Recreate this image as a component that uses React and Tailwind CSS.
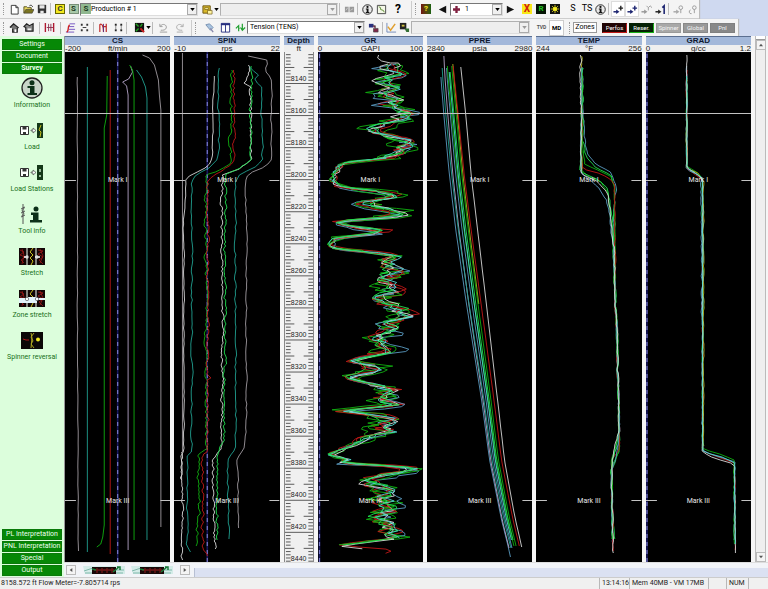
import React from "react";
import clsx from "clsx";

const GREEN = "#10b010";
const LIME = "#20e050";
const TEAL = "#20a090";
const AQUA = "#50d8d0";
const WHITE = "#d8d8d8";
const GREY = "#a09aa0";
const LILAC = "#b4a4c8";
const RED = "#c01818";
const BLUE = "#5a9ac0";
const YELLOW = "#b0b020";

/* ---------- curve helpers ---------- */

function random(seed) {
  let s = (seed * 7919 + 17) % 233280;
  return () => {
    s = (s * 9301 + 49297) % 233280;
    return s / 233280 - 0.5;
  };
}

function valueAt(points, y) {
  if (y <= points[0][1]) return points[0][0];
  for (let i = 1; i < points.length; i++) {
    const [x1, y1] = points[i];
    const [x0, y0] = points[i - 1];
    if (y <= y1) return x0 + ((x1 - x0) * (y - y0)) / (y1 - y0 || 1);
  }
  return points[points.length - 1][0];
}

function trace(points, { noise = 0, seed = 1, step = 2, shift = 0, calmBelow = 0 } = {}) {
  if (!noise) return "M" + points.map((p) => p.join(" ")).join("L");
  const next = random(seed);
  const out = [];
  let drift = 0;
  const end = points[points.length - 1][1];
  for (let y = points[0][1]; y <= end; y += step) {
    const x = valueAt(points, y + shift);
    drift = drift * 0.45 + next() * noise * (x < calmBelow ? 0.35 : 1);
    out.push(`${(x + drift).toFixed(1)} ${y.toFixed(1)}`);
  }
  return "M" + out.join("L");
}

const line = (color, pts, noise = 0, seed = 1, step = 2) => ({ color, d: trace(pts, { noise, seed, step }) });

/* ---------- track data, in chart units ---------- */

const cs = [
  line(GREY, [[77.5, 77], [77.5, 300], [78.5, 554]], 0.5, 2, 6),
  line(TEAL, [[87.5, 67], [87.5, 552]]),
  line(GREEN, [[107.5, 76], [107, 115], [104.5, 128], [104.5, 525], [103, 537], [101, 544], [97, 547]]),
  line(RED, [[110.5, 70], [110.5, 554]]),
  line(LILAC, [[131, 66], [133, 72], [129, 79], [123, 82], [127, 86], [128.5, 95], [128.5, 550]]),
  line(GREEN, [[130, 65], [133, 70], [134.5, 80], [134.5, 540]]),
  line(TEAL, [[137, 70], [142, 77], [146, 87], [147.5, 98], [147.5, 540]]),
  line(GREY, [[143, 55], [150, 58], [155, 65], [159, 80], [160, 95], [161.5, 110], [161.5, 527]]),
];

const spin = [
  line(GREY, [[182.5, 53], [182.5, 452]]),
  line(WHITE, [[182, 452], [181, 470], [183, 510], [182, 560]], 2, 21, 2),
  line(WHITE, [[215, 76], [213, 100], [213, 155], [211, 163], [203, 170], [190, 175], [186, 180], [185, 200], [183, 235], [184, 250], [184, 450], [181, 455], [182, 480]], 1, 3, 4),
  line(TEAL, [[219, 68], [219, 150], [217, 160], [210, 168], [195, 176], [192, 185], [192, 452], [187, 456], [187, 545], [191, 552]], 1.8, 4, 4),
  line(GREEN, [[232, 70], [232, 120], [230, 140], [231, 163], [220, 169], [207, 175], [206, 195], [207, 449], [199, 455], [198, 540], [194, 547]], 3, 5),
  line(RED, [[234.5, 70], [234, 163], [222, 171], [208, 179], [208, 375], [213, 377], [208, 380], [208, 450], [203, 456], [203, 545], [207, 556]], 2.6, 6),
  line(WHITE, [[250, 65], [248, 77], [244, 83], [251, 87], [251, 160], [240, 169], [224, 175], [222, 185], [222, 250], [223, 310], [222, 440], [220, 451], [213, 460], [215, 550]], 2.4, 7),
  line(LIME, [[251, 66], [252, 80], [251, 120], [252, 160], [240, 168], [226, 174], [225, 250], [226, 320], [224, 440], [218, 455], [218, 540]], 2.6, 8),
  line(TEAL, [[250, 67], [260, 75], [256, 79], [262, 87], [263, 160], [255, 168], [240, 174], [236, 180], [236, 445], [228, 460], [229, 540]], 2, 9, 4),
  line(GREY, [[249, 56], [262, 58], [270, 61], [266, 70], [272, 80], [272, 160], [265, 167], [248, 174], [246, 183], [247, 250], [247, 430], [245, 448], [238, 458], [239, 528]], 1.4, 10, 4),
];

const grCenter = [
  [386, 64], [382, 69], [394, 73], [383, 78], [382, 83], [396, 87], [384, 94], [394, 100], [386, 104], [398, 108],
  [409, 113], [396, 120], [380, 125], [373, 131], [388, 136], [400, 140], [408, 144], [398, 150], [390, 155],
  [380, 159], [343, 163], [335, 170], [333, 178], [336, 186], [352, 189], [380, 192], [394, 196], [365, 202],
  [370, 207], [393, 210], [403, 215], [380, 218], [330, 222], [352, 227], [385, 231], [372, 234], [333, 238],
  [328, 245], [336, 249], [378, 253], [390, 257], [382, 263], [394, 271], [385, 280], [393, 290], [378, 301],
  [392, 307], [408, 317], [386, 324], [393, 331], [372, 340], [389, 348], [378, 354], [350, 361], [374, 367],
  [376, 371], [346, 377], [366, 384], [390, 390], [380, 400], [394, 406], [340, 411], [370, 414], [391, 420],
  [378, 427], [389, 432], [366, 438], [350, 446], [329, 455], [348, 460], [336, 463], [370, 465], [406, 467],
  [412, 471], [382, 475], [368, 483], [387, 490], [382, 500], [390, 508], [380, 517], [389, 527], [386, 535],
  [392, 539], [338, 546], [370, 549], [394, 555],
];

const gamma = (color, noise, seed, step, shift, cut) => ({
  color,
  d: trace(cut ? grCenter.slice(0, -cut) : grCenter, { noise, seed, step, shift, calmBelow: 362 }),
});

const gr = [
  gamma(RED, 24, 31, 2.1, 0.8, 0),
  gamma(GREEN, 30, 132, 1.9, 1.2, 2),
  gamma(BLUE, 26, 34, 2.3, -1.2, 3),
  gamma(GREEN, 28, 235, 2.2, -0.6, 3),
  gamma(WHITE, 18, 333, 2.4, 0, 1),
  gamma(RED, 20, 438, 2.5, -0.4, 3),
  gamma(AQUA, 18, 536, 2.3, 0, 3),
  gamma(LIME, 20, 637, 2.6, 0.5, 2),
  line(WHITE, [[378, 55], [377, 58], [381, 61], [390, 63], [398, 63], [400, 66], [394, 68]]),
];

const pressLeft = [[440, 56], [441, 77], [444, 115], [449, 170], [456, 230], [467, 306], [482, 400], [490, 460], [502, 520], [511, 556]];
const pressRight = [[460, 56], [461, 67], [466, 115], [472, 180], [487, 306], [498, 400], [505, 460], [515, 515], [523, 550]];

function pressure(color, f0, f1, top, bottom) {
  const pts = [];
  for (let y = top; y <= bottom; y += 12) {
    const f = f0 + ((f1 - f0) * (y - 56)) / 500;
    const l = valueAt(pressLeft, y);
    pts.push([(l + (valueAt(pressRight, y) - l) * f).toFixed(1), y]);
  }
  return { color, d: trace(pts) };
}

const ppre = [
  pressure(BLUE, 0, 0, 77, 557),
  pressure(LILAC, 0.2, 0.04, 56, 548),
  pressure(TEAL, 0.08, 0.18, 68, 554),
  pressure(BLUE, 0.3, 0.26, 68, 548),
  pressure(GREEN, 0.34, 0.44, 66, 548),
  pressure(AQUA, 0.42, 0.36, 72, 546),
  pressure(LIME, 0.46, 0.48, 72, 544),
  pressure(YELLOW, 0.62, 0.62, 64, 310),
  pressure(GREEN, 0.56, 0.6, 66, 546),
  pressure(RED, 0.63, 0.84, 66, 553),
  pressure(WHITE, 1, 1, 67, 554),
];

const tempTail = [[616, 306], [617, 320], [619, 400], [620, 430]];
const temp = [
  line(YELLOW, [[582, 56], [582, 173]], 1.6, 51),
  line(BLUE, [[583, 67], [583, 77], [584, 120], [585, 140], [588, 155], [597, 165], [610, 172], [615, 180], [616, 190], [614, 205], ...tempTail, [618, 446], [612, 458], [613, 545]], 1.6, 52, 3),
  line(LIME, [[583, 68], [583, 140], [586, 157], [596, 168], [611, 175], [615, 185], [615, 240], ...tempTail, [620, 450], [612, 470], [612, 490], [615, 540]], 1.6, 53, 3),
  line(GREEN, [[582, 68], [583, 150], [585, 164], [598, 170], [612, 177], [615, 190], ...tempTail, [619, 452], [613, 470], [613, 530]], 1, 54, 3),
  line(RED, [[582, 68], [582, 169], [596, 172], [609, 178], [615, 184], ...tempTail, [620, 450], [612, 459], [612, 480], [614, 553]], 1.2, 55, 3),
  line(GREEN, [[582, 68], [582, 170], [588, 176], [602, 182], [608, 192], [611, 215], [614, 250], ...tempTail, [617, 446], [612, 460], [613, 540]], 1.2, 56, 3),
  line(LIME, [[582, 68], [581, 172], [598, 179], [608, 188], [612, 210], [614, 250], ...tempTail, [616, 450], [612, 470], [613, 540]], 1.4, 57, 3),
  line(BLUE, [[582, 68], [581, 173], [590, 180], [600, 188], [607, 200], [610, 215], [614, 250], ...tempTail, [618, 449], [612, 475], [613, 535]], 1.2, 58, 3),
  line(WHITE, [[581, 55], [582, 60], [580, 66], [582, 120], [581, 174], [598, 182], [609, 195], [612, 225], [615, 250], ...tempTail, [613, 455], [612, 490], [614, 554]], 1.4, 59, 3),
];

const grad = [
  line(RED, [[687, 70], [687, 168], [696, 175], [703, 180], [703, 451], [715, 456], [735, 463], [736, 550]], 1.2, 61, 3),
  line(BLUE, [[687, 66], [687, 168], [690, 171], [701, 176], [702, 240], [703, 451], [735, 462], [735, 540]], 1.4, 62, 3),
  line(GREEN, [[687, 76], [687, 166], [699, 174], [703, 180], [703, 450], [716, 452], [734, 460], [735, 545]], 1.2, 63, 3),
  line(YELLOW, [[687, 80], [687, 168], [698, 173], [704, 182], [704, 448]], 1, 64, 3),
  line(WHITE, [[687, 55], [687, 168], [696, 173], [703, 179], [703, 452], [714, 458], [735, 464], [736, 555]], 0.7, 65, 3),
  line(AQUA, [[687, 76], [687, 167], [695, 173], [703, 178], [703, 452], [722, 457], [735, 463], [736, 545]], 0.8, 66, 3),
];

const tracks = [
  { id: "CS", left: "-200", unit: "ft/min", right: "200", x: 65, zero: 118, curves: cs },
  { id: "SPIN", left: "-10", unit: "rps", right: "22", x: 174, zero: 207.5, curves: spin },
  { id: "GR", left: "0", unit: "GAPI", right: "100", x: 317, zero: 318.5, curves: gr },
  { id: "PPRE", left: "2840", unit: "psia", right: "2980", x: 427, curves: ppre },
  { id: "TEMP", left: "244", unit: "°F", right: "256", x: 536, curves: temp },
  { id: "GRAD", left: "0", unit: "g/cc", right: "1.2", x: 646, zero: 647, curves: grad },
];

/* ---------- tracks ---------- */

function TrackHead({ title, children }) {
  return (
    <header className="font-['Liberation_Sans',sans-serif] text-[8px] leading-[8px] text-[#222]">
      <h2 className="h-[9px] border-t border-[#5b6f90] bg-[#a3b8da] text-center font-bold text-[#101830]">{title}</h2>
      <div className="flex h-[7px] items-center justify-between bg-[#efefef]">{children}</div>
    </header>
  );
}

function MarkLabel({ className, children }) {
  return (
    <span className={clsx("absolute inset-x-0 -translate-y-1/2 text-center text-[7px] leading-[8px] text-[#e8e8e8]", className)}>
      {children}
    </span>
  );
}

function Track({ track }) {
  const { id, left, unit, right, x, zero, curves } = track;
  return (
    <section className="flex min-w-0 flex-1 flex-col">
      <TrackHead title={id}>
        <span className="flex-1">{left}</span>
        <span>{unit}</span>
        <span className="flex-1 text-right">{right}</span>
      </TrackHead>
      <div className="relative flex-1 overflow-hidden bg-black">
        <svg className="absolute inset-0 h-full w-full" viewBox={`${x} 52 106 510`} preserveAspectRatio="none" fill="none" role="img" aria-label={`${id} curves`}>
          {zero && (
            <>
              <path d={`M${zero} 52V562`} stroke="#181860" strokeWidth="1.6" />
              <path d={`M${zero} 54V562`} stroke="#7878c8" strokeWidth="1.2" strokeDasharray="4 4" />
            </>
          )}
          {curves.map((c, i) => (
            <path key={i} d={c.d} stroke={c.color} strokeWidth="0.9" strokeLinejoin="round" />
          ))}
          <path d={`M${x} 113.5h106M${x} 180.5h11M${x + 96} 180.5h10M${x} 500.5h11M${x + 96} 500.5h10`} stroke="#c4c4c4" />
        </svg>
        <MarkLabel className="top-[25%]">Mark I</MarkLabel>
        <MarkLabel className="top-[88%]">Mark III</MarkLabel>
      </div>
    </section>
  );
}

function DepthTrack() {
  const ticks = [];
  for (let ft = 8122; ft <= 8438; ft += 2) {
    const y = 31.5 + (ft - 8140) * 1.603;
    if (y < 1) continue;
    ticks.push(ft % 20 === 0 ? `M0 ${y}h30` : ft % 10 === 0 ? `M0 ${y}h10M20 ${y}h10` : `M1 ${y}h5M25 ${y}h5`);
  }
  const labels = Array.from({ length: 16 }, (_, i) => 8140 + i * 20);
  return (
    <section className="flex w-[30px] flex-col">
      <TrackHead title="Depth">
        <span className="flex-1 text-center">ft</span>
      </TrackHead>
      <div className="relative flex-1 overflow-hidden border-x border-[#888] bg-[#f0f0f0]">
        <svg className="absolute inset-0 h-full w-full" viewBox="0 0 30 510" preserveAspectRatio="none" aria-hidden="true">
          <path d={ticks.join("")} stroke="#444" strokeWidth="0.9" />
        </svg>
        {labels.map((ft) => (
          <span
            key={ft}
            className="absolute inset-x-0 -translate-y-1/2 text-center font-['Liberation_Sans',sans-serif] text-[7px] leading-[8px] text-[#222]"
            style={{ top: `${((26.5 + (ft - 8140) * 1.603) / 510) * 100}%` }}
          >
            {ft}
          </span>
        ))}
      </div>
    </section>
  );
}

/* ---------- toolbar pieces ---------- */

function Tool({ label, className = "w-[14px]", children }) {
  return (
    <button type="button" aria-label={label} title={label} className={clsx("flex h-4 shrink-0 items-center justify-center", className)}>
      {children}
    </button>
  );
}

const Glyph = ({ children, className = "h-[11px] w-[11px]" }) => (
  <svg viewBox="0 0 12 12" className={className} fill="none" aria-hidden="true">
    {children}
  </svg>
);

const Sep = () => <span className="mx-[1px] h-3 w-[2px] shrink-0 border-l border-[#bbb]" />;
const Grip = () => <span className="mr-[2px] ml-[3px] h-3 w-[2px] shrink-0 border-l border-dotted border-[#999]" />;
const DownArrow = ({ className }) => (
  <svg viewBox="0 0 6 4" className={clsx("h-[3px] w-[5px]", className)} aria-hidden="true">
    <path d="M0 0h6L3 4z" fill="currentColor" />
  </svg>
);

function Combo({ label, value = "", className, pad = "pl-[2px]", disabled = false, icon }) {
  return (
    <span
      className={clsx(
        "relative flex h-[13px] shrink-0 items-center border border-r-[#ddd] border-b-[#ddd]",
        disabled ? "border-[#b0b0b0] bg-[#eeeeee] text-[#999]" : "border-[#777] bg-white text-black",
        className,
      )}
    >
      {icon}
      <select aria-label={label} disabled={disabled} className={clsx("h-full w-full appearance-none bg-transparent text-[7px] leading-[11px] outline-none", pad)}>
        <option>{value}</option>
      </select>
      <span className="pointer-events-none absolute top-0 right-0 flex h-[11px] w-[10px] items-center justify-center border border-[#aaa] bg-[#f0f0f0]">
        <DownArrow />
      </span>
    </span>
  );
}

const Letter = ({ children, className }) => (
  <span className={clsx("flex h-[10px] w-[10px] items-center justify-center text-[8px] leading-[8px] font-bold", className)}>{children}</span>
);

const InfoGlyph = ({ className }) => (
  <Glyph className={className}>
    <circle cx="6" cy="6" r="5.2" fill="#e8e8e8" stroke="#222" strokeWidth="1" />
    <circle cx="6" cy="3.2" r="1.2" fill="#111" />
    <path d="M4.2 5h2.900v3.600h1v1.200H4.100V8.600h1V6h-.9z" fill="#111" />
  </Glyph>
);

const ArrowPair = ({ tone = "#1c2470", extra }) => (
  <Glyph>
    <path d="M0.5 8.5h4" stroke={tone} strokeWidth="1.6" />
    <path d="M3.5 6v5L7 8.5z" fill={tone} />
    {extra}
  </Glyph>
);

function MainToolbar() {
  return (
    <div role="toolbar" aria-label="Main" className="flex h-[19px] w-fit items-center border-b border-[#d0d0d0] bg-[#f4f4f4] shadow-[1px_0_1px_#bbb]">
      <Grip />
      <Tool label="New"><Glyph><path d="M2.500 1.500h5l2.500 2.500v7h-7.500zM7.500 1.500V4H10" fill="#fff" stroke="#333" /></Glyph></Tool>
      <Tool label="Open"><Glyph><path d="M1 10V3h3l1 1h4v2" fill="#e8d860" stroke="#55501c" /><path d="M1 10l2-4h9l-2 4z" fill="#7a7420" stroke="#333" strokeWidth=".6" /><path d="M7 2c2-1.500 3 0 3.500 1" stroke="#222" /></Glyph></Tool>
      <Tool label="Save"><Glyph className="h-[10px] w-[10px]"><path d="M1 1h10v10H1z" fill="#333" /><path d="M3 1.500h6v4H3zM4 8h4v3H4z" fill="#e8e8e8" /></Glyph></Tool>
      <Sep />
      <Tool label="Customise"><Letter className="border border-[#666600] bg-[#f4e820] text-[#333]">C</Letter></Tool>
      <Tool label="Session" className="w-[13px]"><Letter className="border border-[#789078] bg-[#a8c8a8] text-[#1d3a1d]">S</Letter></Tool>
      <Combo label="Survey" value="Production # 1" className="w-[118px]" icon={<Letter className="shrink-0 bg-[#90b890] text-[#1d3a1d]">S</Letter>} pad="pl-0" />
      <Tool label="Document" className="ml-[2px] w-[14px]"><Glyph><path d="M1 2h8v8H1z" fill="#d8b828" stroke="#6b5410" /><path d="M3 4h4v2H3zM6 7h5v4H6z" fill="#fff4a0" stroke="#6b5410" strokeWidth=".7" /></Glyph></Tool>
      <DownArrow className="mr-[1px]" />
      <Combo label="Document list" disabled className="w-[118px]" />
      <Sep />
      <Tool label="Panels"><Glyph><path d="M1 3h4v6H1zM6 3h5v6H6z" fill="#999" /><path d="M2 7l2-3M7 7l3-2" stroke="#ccc" /></Glyph></Tool>
      <Sep />
      <Tool label="Information"><InfoGlyph className="h-[11px] w-[11px]" /></Tool>
      <Tool label="Plot"><Glyph><path d="M1.500 1.500h9v9h-9z" fill="#f4f8e8" stroke="#444" /><path d="M3 3l2 1v2l3 1 1 2" stroke="#5a8a30" /></Glyph></Tool>
      <Tool label="Help" className="ml-[3px] w-[14px]"><span className="text-[12px] leading-none font-bold">?</span></Tool>
      <span className="ml-[6px] h-[17px] w-px bg-[#ccc]" />
      <Grip />
      <Tool label="Query"><Letter className="bg-gradient-to-r from-[#701010] to-[#106010] text-[#f4e820]">?</Letter></Tool>
      <Tool label="Previous" className="ml-[2px] w-[14px]"><Glyph><path d="M10 2v8L2 6z" fill="#111" /></Glyph></Tool>
      <Combo label="Pass" value="1" className="ml-px w-[53px]" icon={<Glyph className="ml-[2px] h-[7px] w-[7px] shrink-0"><path d="M6 0v12M0 6h12" stroke="#802040" strokeWidth="4" /></Glyph>} pad="pl-[5px]" />
      <Tool label="Next"><Glyph><path d="M2 2v8l8-4z" fill="#111" /></Glyph></Tool>
      <Tool label="Exclude" className="ml-[3px] w-[14px]"><Letter className="bg-[#f8e818] text-[10px] text-[#d02010]">X</Letter></Tool>
      <Tool label="Reset"><Letter className="bg-[#041404] text-[#20c020]">R</Letter></Tool>
      <Tool label="Highlight"><Glyph className="h-[10px] w-[10px]"><path d="M0 0h12v12H0z" fill="#111" /><path d="M6 1v10M1 6h10M2.500 2.500l7 7M9.500 2.500l-7 7" stroke="#e8e020" /><circle cx="6" cy="6" r="2.500" fill="#f8f020" /></Glyph></Tool>
      <Tool label="Stations" className="ml-[4px] w-[14px] text-[9px]">S</Tool>
      <Tool label="Time stations" className="w-[14px] text-[9px]">TS</Tool>
      <Tool label="Tool info" className="w-[13px]"><InfoGlyph className="h-[11px] w-[11px]" /></Tool>
      <Sep />
      <Tool label="Add mark" className="w-[14px] border border-[#ddd] bg-white"><ArrowPair extra={<path d="M8.500 2v5M6 4.500h5" stroke="#222" strokeWidth="1.500" />} /></Tool>
      <Tool label="Move mark" className="w-[14px] border border-[#ddd] bg-white"><ArrowPair extra={<path d="M8.500 2v5M6 4.500h5" stroke="#1c2470" strokeWidth="1.500" />} /></Tool>
      <Tool label="Delete mark"><ArrowPair tone="#999" extra={<path d="M6 2l2 2 2-2 2 2M8 4v3" stroke="#999" />} /></Tool>
      <Tool label="First mark"><ArrowPair tone="#222" extra={<path d="M8 4l2-2v9" stroke="#1c2470" strokeWidth="1.700" />} /></Tool>
      <Sep />
      <Tool label="Pin left"><ArrowPair tone="#aaa" extra={<><circle cx="8.500" cy="4" r="2" stroke="#999" /><path d="M8.500 6v4" stroke="#999" /></>} /></Tool>
      <Tool label="Pin right"><Glyph><circle cx="8" cy="4" r="2" stroke="#999" /><path d="M8 6v4M4 6.500a2 2 0 1 0 1 4" stroke="#999" /></Glyph></Tool>
    </div>
  );
}

const dots = "M2 2h2v2H2zM8 2h2v2H8zM2 8h2v2H2zM8 8h2v2H8z";

const zones = [
  { name: "Perfos", style: "bg-[#200404] text-white border-[#200404] border-r-[#c01818] border-b-[#c01818]" },
  { name: "Reser.", style: "bg-[#042004] text-white border-[#042004] border-r-[#18b018] border-b-[#18b018]" },
  { name: "Spinner", style: "bg-[#a8a8a8] text-[#f4f4f4] border-[#999]" },
  { name: "Global", style: "bg-[#999999] text-[#f4f4f4] border-[#888]" },
  { name: "Pnl", style: "bg-[#888888] text-[#f4f4f4] border-[#808080]" },
];

function EditToolbar() {
  return (
    <div role="toolbar" aria-label="Edit" className="flex h-[17px] w-fit items-center bg-[#f4f4f4] pr-[2px] shadow-[1px_0_1px_#bbb]">
      <Grip />
      <Tool label="Home view"><Glyph><path d="M1 6l4-4 5 4-1 1v4H4V7" fill="#777" stroke="#222" strokeWidth="1.300" /><path d="M6 8h2v3H6z" fill="#fff" /></Glyph></Tool>
      <Tool label="Fit view"><Glyph><path d="M1 5l3-3 3 2 4-2v8H3V6z" fill="#888" stroke="#222" strokeWidth="1.300" /><path d="M5 7h4v2H5z" fill="#eee" /></Glyph></Tool>
      <span className="w-[3px]" />
      <Sep />
      <Tool label="Width" className="w-[15px]"><Glyph><path d="M1.500 1v10M10.500 1v10" stroke="#b01830" strokeWidth="1.500" /><path d="M5 2v8M7.500 2v8M3 6h7" stroke="#8c3050" /></Glyph></Tool>
      <span className="w-[2px]" />
      <Sep />
      <Tool label="Layers"><Glyph><path d="M1 11h9M4 8h7M4 5h6M5 2h6" stroke="#7050c0" /><path d="M2 11c3-2 0-5 3-8" stroke="#d02020" strokeWidth="1.500" /></Glyph></Tool>
      <Tool label="Spacing"><Glyph><path d={dots} fill="#333" /><path d="M4 6h4" stroke="#333" /></Glyph></Tool>
      <span className="w-[1px]" />
      <Sep />
      <Tool label="Curves" className="w-[15px]"><Glyph><path d="M2 11V3c2-2 4 1 4 8M5 5h4M9 11V2" stroke="#c02828" strokeWidth="1.300" /><path d="M6 2v9" stroke="#5a3080" /></Glyph></Tool>
      <Tool label="Align"><Glyph><path d={dots} fill="#222" /><path d="M3 4v4M9 4v4" stroke="#888" /></Glyph></Tool>
      <Sep />
      <Tool label="Palette" className="ml-[3px] w-[14px]"><Glyph><path d="M1 1h10v10H1z" fill="#111" /><path d="M2 2l3 3M2 10l3-3M9 2L7 5" stroke="#20a020" strokeWidth="1.500" /><path d="M7 7l4 4" stroke="#d02020" strokeWidth="2" /></Glyph></Tool>
      <DownArrow />
      <Sep />
      <Tool label="Undo" className="w-[16px]"><Glyph><path d="M2 2v3h3M2.500 4.500C5 1 10 3 9 6.500 8 9 6 9 3 9M2 11h8" stroke="#999" /></Glyph></Tool>
      <Tool label="Redo" className="w-[16px]"><Glyph><path d="M10 2v3H7M9.500 4.500C7 1 2 3 3 6.500 4 9 6 9 9 9M3 11h7" stroke="#aaa" /></Glyph></Tool>
      <span className="ml-[4px] h-[16px] w-px bg-[#ccc]" />
      <Grip />
      <Tool label="Brush" className="ml-[2px] w-[16px]"><Glyph><path d="M2 3l4-1 4 4-3 3z" fill="#a8c4e0" stroke="#7890b0" /><path d="M7 7l3 4" stroke="#88a" strokeWidth="1.500" /></Glyph></Tool>
      <Tool label="Columns" className="w-[16px]"><Glyph><path d="M1.500 1.500h9v9.500h-9zM6 3v8" fill="#fff" stroke="#283080" /><path d="M1 2.500h10" stroke="#283080" strokeWidth="2" /></Glyph></Tool>
      <Tool label="Refresh"><Glyph><path d="M1 7l3-3v6M4 7h1M8 2v6M6 6l2 3 3-3" stroke="#20a030" strokeWidth="1.300" /></Glyph></Tool>
      <Combo label="Channel" value="Tension (TENS)" className="w-[118px]" />
      <Tool label="Swap" className="w-[16px]"><Glyph><path d="M1 2h5v4H1z" fill="#283080" /><path d="M5 4h3v3M6 7h5v4H6z" fill="#802848" stroke="#444" strokeWidth=".7" /></Glyph></Tool>
      <Sep />
      <Tool label="Fit line" className="w-[13px]"><Glyph><path d="M1 1v10h10" stroke="#7088b8" /><path d="M2 5l3 4 5-7" stroke="#e0a030" strokeWidth="1.600" /></Glyph></Tool>
      <Tool label="Export" className="w-[13px]"><Glyph><path d="M1 1h7v7H1z" fill="#222" /><path d="M3 3h3v2H3z" fill="#d0c040" /><path d="M6 7h5v4H8z" fill="#357035" /></Glyph></Tool>
      <Combo label="Interval" disabled className="w-[119px]" />
      <Tool label="True vertical depth" className="ml-[4px] w-[15px] text-[5px] font-bold text-[#555]">TVD</Tool>
      <Tool label="Measured depth" className="w-[15px] border border-[#ccc] bg-white text-[6px] font-bold">MD</Tool>
      <span className="ml-[2px]" />
      <Grip />
      <Tool label="Zones" className="w-[24px]"><span className="border border-[#999] bg-white px-[1px] text-[7px] leading-[9px]">Zones</span></Tool>
      <span className="w-[4px]" />
      {zones.map((z) => (
        <Tool key={z.name} label={z.name} className="w-[27px]">
          <span className={clsx("block h-[10px] w-[25px] border text-center text-[6px] leading-[8px] whitespace-nowrap", z.style)}>{z.name}</span>
        </Tool>
      ))}
    </div>
  );
}

/* ---------- sidebar ---------- */

const floppy = (
  <>
    <path d="M1.500 7.500h8v8h-8z" fill="#fff" stroke="#333" />
    <path d="M3.500 7.500h4v3h-4zM4 13h3v2.500H4z" fill="#333" />
    <path d="M12 11h2v-2l3 2.500-3 2.500v-2h-2z" fill="#fff" stroke="#333" strokeWidth=".6" />
  </>
);

const stretchPanel = (
  <>
    <path d="M0 3h26v17H0z" fill="#120606" />
    <path d="M8 3v17M17 3v17" stroke="#f4fff4" />
    <path d="M1 5l4 2-4 3 5 2-4 3 3 3M19 5l5 1-5 3 5 3-4 3 4 4M3 4l2 6-2 9M21 4l3 7-3 7" stroke="#a01818" strokeWidth=".8" />
    <path d="M14 3l-3 4 3 3-3 3 3 3-2 4" stroke="#c8c020" />
  </>
);

const items = [
  { label: "Information", icon: <><circle cx="13" cy="11" r="10" fill="#c8d4c8" stroke="#222" strokeWidth="1.300" /><circle cx="13" cy="5.800" r="2.500" fill="#0c3018" /><path d="M8.500 9h7v7H18v2H8.500v-2H11v-5H8.500z" fill="#0c3018" /></> },
  { label: "Load", icon: <>{floppy}<path d="M18 4h6v15h-6z" fill="#143818" /><path d="M22 6l-2 5 2 2-1 5" stroke="#c8c020" /></> },
  { label: "Load Stations", icon: <>{floppy}<path d="M18 4h6v15h-6z" fill="#143818" /><path d="M21 8v3M21 14v2" stroke="#c8e8c8" strokeWidth="1.500" /></> },
  { label: "Tool info", icon: <><path d="M4 1v20M2 6l4-2M2 10l4-2M2 14l4-2M4 4c3 2-3 3 0 5s-3 3 0 5" stroke="#555" /><circle cx="17" cy="6" r="2.500" fill="#0c3018" /><path d="M12 9.500h7.500V17H23v2.500H11V17h3v-5h-2z" fill="#0c3018" /></> },
  { label: "Stretch", icon: <>{stretchPanel}<path d="M5 12h4M16 12h5" stroke="#fff" strokeWidth="1.500" /><circle cx="8" cy="12" r="1.700" fill="#ddd" /><circle cx="18" cy="12" r="1.700" fill="#ddd" /></> },
  { label: "Zone stretch", icon: <>{stretchPanel}<path d="M0 11h9v5H0zM9 10h9v6H9zM18 11h8v2h-8z" fill="#e4f4fc" /><circle cx="8" cy="12" r="1.700" fill="#fff" stroke="#444" strokeWidth=".6" /><circle cx="18" cy="12" r="1.700" fill="#fff" stroke="#444" strokeWidth=".6" /></> },
  { label: "Spinner reversal", icon: <><path d="M2 3h22v17H2z" fill="#0c0808" /><path d="M4 10l3 1h3" stroke="#b01818" /><path d="M15 4l-3 4 2 4-2 3 3 4M12 4l1 5-1 10" stroke="#b0a820" /><circle cx="19" cy="10.500" r="2" fill="#f0e820" /></> },
];

const NavButton = ({ children, bold }) => (
  <button
    type="button"
    className={clsx("mb-px block h-[11px] w-full border border-[#0a7a0a] bg-[#068806] text-center text-[7px] leading-[9px] whitespace-nowrap text-[#f0fff0]", bold && "font-bold")}
  >
    {children}
  </button>
);

function Sidebar() {
  return (
    <nav aria-label="Workflow" className="flex w-16 shrink-0 flex-col bg-[#dcfedc] px-[2px] pt-[3px]">
      <NavButton>Settings</NavButton>
      <NavButton>Document</NavButton>
      <NavButton bold>Survey</NavButton>
      <div className="flex-1 pt-[2px]">
        {items.map((it) => (
          <button key={it.label} type="button" className="flex h-[42px] w-full flex-col items-center text-[7px] leading-[10px] whitespace-nowrap text-[#187018]">
            <svg viewBox="0 0 26 22" className="mb-[1px] h-[22px] w-[26px]" fill="none" aria-hidden="true">{it.icon}</svg>
            {it.label}
          </button>
        ))}
      </div>
      <NavButton>PL Interpretation</NavButton>
      <NavButton>PNL Interpretation</NavButton>
      <NavButton>Special</NavButton>
      <NavButton>Output</NavButton>
    </nav>
  );
}

/* ---------- bottom strip and status ---------- */

function SmallButton({ label, d }) {
  return (
    <button type="button" aria-label={label} className="flex h-[10px] w-[10px] shrink-0 items-center justify-center border border-[#bbb] bg-[#f4f4f4]">
      <svg viewBox="0 0 6 6" className="h-[4px] w-[4px]" aria-hidden="true"><path d={d} fill="#555" /></svg>
    </button>
  );
}

function Thumb({ label }) {
  return (
    <button type="button" aria-label={label} className="h-[10px] w-[42px] shrink-0">
      <svg viewBox="0 0 42 10" className="h-full w-full" fill="none" aria-hidden="true">
        <path d="M0 1h42v8H2z" fill="#d4ece8" />
        <path d="M2 8h10M1 6l9-3M31 5h10M30 8h10" stroke="#80b8ac" />
        <path d="M9 2h24v7H9z" fill="#180808" />
        <path d="M14 3v5M19 3v5M24 3v5M29 3v5M11 5h20" stroke="#701818" strokeWidth="1.300" />
        <path d="M9 4l4 1M30 7l6-5M34 2h3v3" stroke="#187838" strokeWidth="1.500" />
      </svg>
    </button>
  );
}

const Pane = ({ children, className }) => <span className={clsx("h-[11px] border-l border-[#b8b8b8] pl-[2px]", className)}>{children}</span>;

export default function App() {
  return (
    <div className="flex min-h-screen flex-col overflow-hidden bg-[#cfd9f0] font-['Roboto','Liberation_Sans',sans-serif] text-black">
      <MainToolbar />
      <EditToolbar />
      <div className="flex flex-1">
        <Sidebar />
        <main className="flex min-w-0 flex-1 flex-col bg-[#f6f6f6]">
          <div className="flex flex-1 gap-1 border-l border-[#999] pr-[2px]">
            <div className="flex min-w-0 flex-1 gap-1">
              <Track track={tracks[0]} />
              <Track track={tracks[1]} />
              <DepthTrack />
              {tracks.slice(2).map((t) => (
                <Track key={t.id} track={t} />
              ))}
            </div>
            <div className="flex w-[11px] flex-col items-center border-x border-[#bbb] bg-[#efefef]">
              <span className="h-[4px] w-full border-b border-[#999] bg-white" />
              <SmallButton label="Scroll up" d="M0 5h6L3 1z" />
              <span className="flex-1" />
              <SmallButton label="Scroll down" d="M0 1h6L3 5z" />
            </div>
          </div>
          <div className="flex h-[15px] items-center border-t border-[#ddd] bg-[#f2f4f8] pl-[2px]">
            <SmallButton label="Scroll left" d="M5 0v6L1 3z" />
            <span className="w-[7px]" />
            <Thumb label="Production view" />
            <span className="w-[6px]" />
            <Thumb label="Survey view" />
            <span className="w-[7px]" />
            <SmallButton label="Scroll right" d="M1 0v6l4-3z" />
            <span className="ml-[4px] h-[9px] flex-1 self-end border-l border-[#b8c0d4] bg-[#dbe1f2]" />
          </div>
        </main>
      </div>
      <footer className="flex h-[12px] items-center border-t border-[#ccc] bg-[#f0f0f0] text-[7px] leading-[11px] whitespace-nowrap text-[#222]">
        <span className="flex-1 pl-[1px]">8158.572 ft Flow Meter=-7.805714 rps</span>
        <Pane className="w-[30px]">13:14:16</Pane>
        <Pane className="w-[79px]">Mem 40MB - VM 17MB</Pane>
        <Pane className="w-[18px]" />
        <Pane className="w-[22px]">NUM</Pane>
        <Pane className="w-[20px]" />
      </footer>
    </div>
  );
}
